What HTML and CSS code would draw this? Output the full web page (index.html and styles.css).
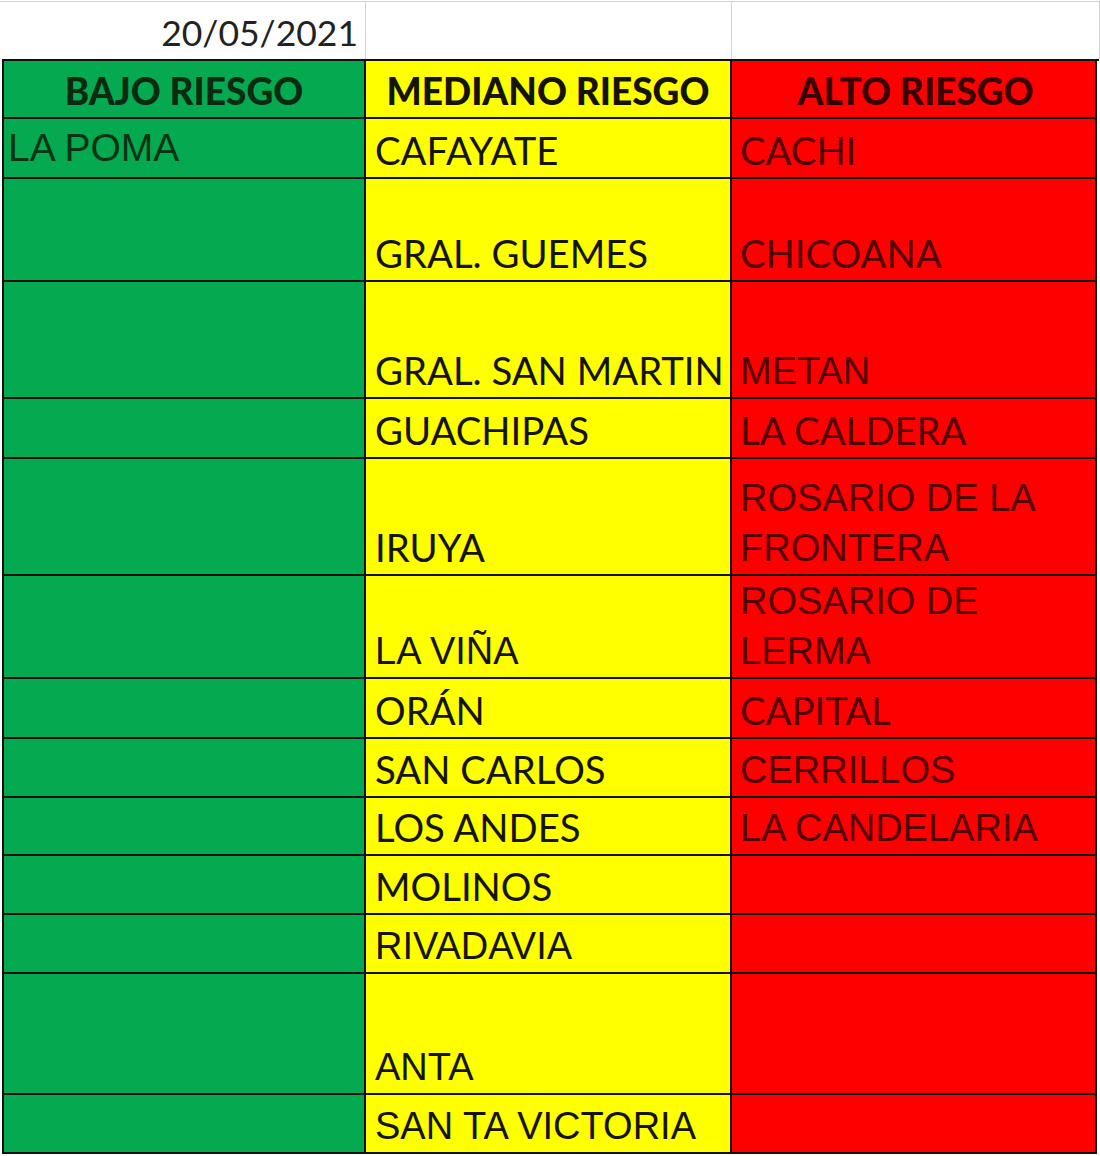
FILE: index.html
```html
<!DOCTYPE html>
<html lang="es">
<head>
<meta charset="utf-8">
<title>Riesgo epidemiológico 20/05/2021</title>
<link rel="stylesheet" href="styles.css">
</head>
<body>
<div class="sheet">
  <div class="date-row">
    <div class="dcell date">20/05/2021</div>
    <div class="dcell"></div>
    <div class="dcell"></div>
  </div>
  <div class="grid">
    <div class="cell g head"><span>BAJO RIESGO</span></div>
    <div class="cell y head"><span>MEDIANO RIESGO</span></div>
    <div class="cell r head"><span>ALTO RIESGO</span></div>

    <div class="cell g ar top big"><span>LA POMA</span></div>
    <div class="cell y ca"><span>CAFAYATE</span></div>
    <div class="cell r ca"><span>CACHI</span></div>

    <div class="cell g"></div>
    <div class="cell y ca"><span>GRAL. GUEMES</span></div>
    <div class="cell r ca"><span>CHICOANA</span></div>

    <div class="cell g"></div>
    <div class="cell y ca"><span>GRAL. SAN MARTIN</span></div>
    <div class="cell r ar"><span>METAN</span></div>

    <div class="cell g"></div>
    <div class="cell y ca"><span>GUACHIPAS</span></div>
    <div class="cell r ca"><span>LA CALDERA</span></div>

    <div class="cell g"></div>
    <div class="cell y ca"><span>IRUYA</span></div>
    <div class="cell r ar"><span>ROSARIO DE LA<br>FRONTERA</span></div>

    <div class="cell g"></div>
    <div class="cell y ar"><span>LA VIÑA</span></div>
    <div class="cell r ar"><span>ROSARIO DE<br>LERMA</span></div>

    <div class="cell g"></div>
    <div class="cell y ca"><span>ORÁN</span></div>
    <div class="cell r ca"><span>CAPITAL</span></div>

    <div class="cell g"></div>
    <div class="cell y ca"><span>SAN CARLOS</span></div>
    <div class="cell r ar"><span>CERRILLOS</span></div>

    <div class="cell g"></div>
    <div class="cell y ca"><span>LOS ANDES</span></div>
    <div class="cell r ar"><span>LA CANDELARIA</span></div>

    <div class="cell g"></div>
    <div class="cell y ca"><span>MOLINOS</span></div>
    <div class="cell r"></div>

    <div class="cell g"></div>
    <div class="cell y ar"><span>RIVADAVIA</span></div>
    <div class="cell r"></div>

    <div class="cell g"></div>
    <div class="cell y ar"><span>ANTA</span></div>
    <div class="cell r"></div>

    <div class="cell g"></div>
    <div class="cell y ar"><span>SAN TA VICTORIA</span></div>
    <div class="cell r"></div>
  </div>
</div>
</body>
</html>
```

FILE: styles.css
```css
html, body {
  margin: 0;
  padding: 0;
  background: #ffffff;
}

.sheet {
  width: 1100px;
  padding-top: 1px;
}

.date-row {
  display: grid;
  grid-template-columns: 366px 366px 368px;
  height: 58px;
  border-top: 1px solid #d4d4d4;
  box-sizing: border-box;
}

.dcell {
  border-right: 1px solid #d4d4d4;
  display: flex;
  align-items: flex-end;
  justify-content: flex-end;
  padding: 0 7px 1px 0;
  font-family: Lato, "Open Sans", sans-serif;
  font-size: 35.5px;
  line-height: 50px;
  color: #222222;
}

.grid {
  display: grid;
  margin-left: 2px;
  width: 1095px;
  grid-template-columns: 362px 366px 365px;
  grid-template-rows: 58px 60px 103px 117px 60px 117px 103px 60px 59px 58px 59px 59px 121px 59px;
  border-top: 2px solid #111111;
  border-left: 2px solid #111111;
}

.cell {
  box-sizing: border-box;
  border-right: 2px solid #111111;
  border-bottom: 2px solid #111111;
  display: flex;
  align-items: flex-end;
  padding: 0 0 2px 9px;
  white-space: nowrap;
}

.g { background: #05aa50; color: #0a3316; }
.y { background: #ffff00; color: #141400; }
.r { background: #ff0000; color: #520000; }
.r.head { color: #380000; }
.g.head { color: #0b2a12; }

.head {
  justify-content: center;
  padding-left: 0;
  padding-bottom: 1px;
  font-family: Lato, "Open Sans", sans-serif;
  font-weight: 900;
  font-size: 37px;
  line-height: 50px;
}

.r.head { padding-left: 4px; }

.ca {
  font-family: Lato, "Open Sans", sans-serif;
  font-size: 38.3px;
  line-height: 50px;
}

.ar {
  font-family: "Liberation Sans", Arial, sans-serif;
  font-size: 38px;
  line-height: 50px;
  padding-bottom: 1px;
  padding-left: 9px;
}

.r.ar, .r.ca { padding-left: 8px; }

.top {
  align-items: flex-start;
  padding-top: 7px;
  padding-left: 4px;
}

.big {
  font-size: 39px;
  line-height: 44px;
}
```
